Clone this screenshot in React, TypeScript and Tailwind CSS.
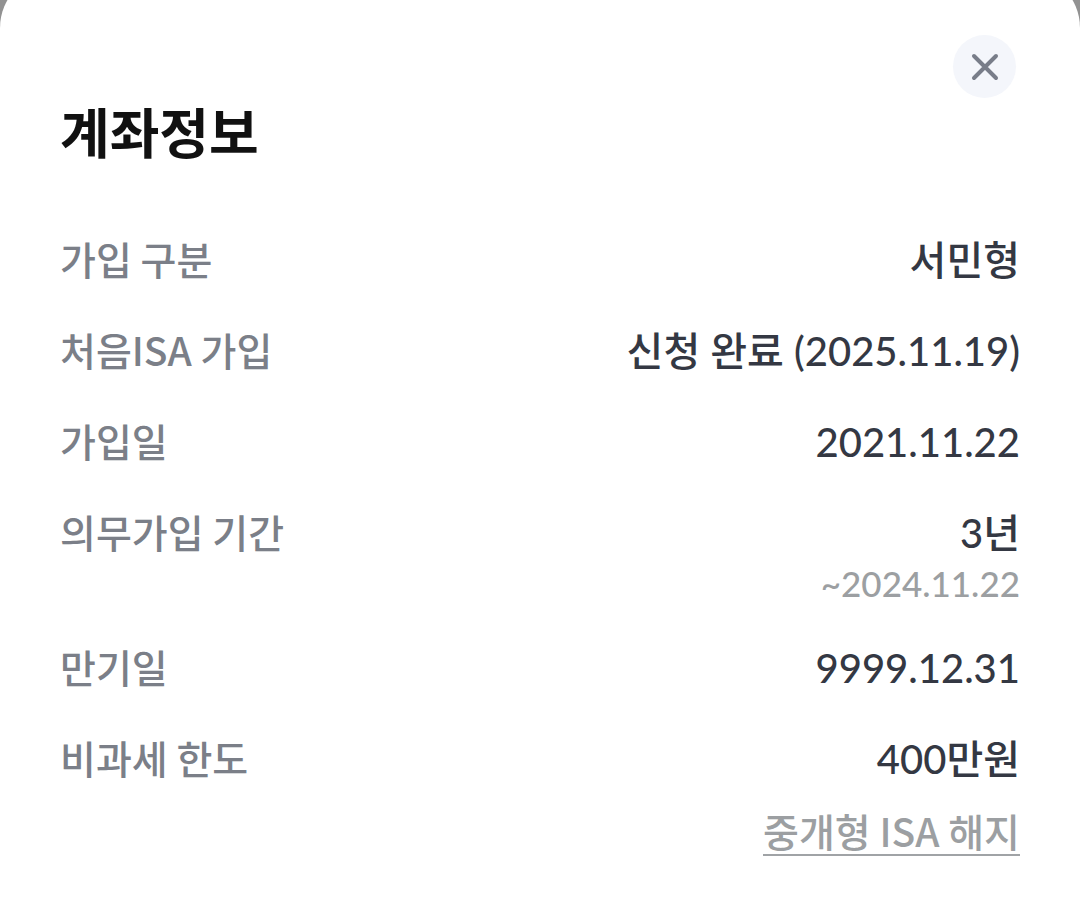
interface InfoItem {
  label: string;
  value: string;
  note?: string;
}

const items: InfoItem[] = [
  { label: "가입 구분", value: "서민형" },
  { label: "처음ISA 가입", value: "신청 완료 (2025.11.19)" },
  { label: "가입일", value: "2021.11.22" },
  { label: "의무가입 기간", value: "3년", note: "~2024.11.22" },
  { label: "만기일", value: "9999.12.31" },
  { label: "비과세 한도", value: "400만원" },
];

function CloseButton() {
  return (
    <button
      type="button"
      aria-label="닫기"
      className="mr-1 flex size-[63px] items-center justify-center rounded-full bg-[#f4f6fb] text-[#787d89]"
    >
      <svg viewBox="0 0 28 28" className="size-7" aria-hidden="true">
        <path
          d="M3 3L25 25M25 3L3 25"
          fill="none"
          stroke="currentColor"
          strokeWidth="4"
          strokeLinecap="round"
        />
      </svg>
    </button>
  );
}

function InfoRow({ label, value, note }: InfoItem) {
  return (
    <div className="flex items-start justify-between gap-6">
      <dt className="font-['Noto_Sans_CJK_KR',sans-serif] text-[39px] leading-[52px] text-[#7b7f88]">
        {label}
      </dt>
      <dd className="text-right text-[40px] leading-[56px] text-[#343843]">
        {value}
        {note && (
          <p className="text-[35px] leading-[44px] text-[#9c9fa2]">{note}</p>
        )}
      </dd>
    </div>
  );
}

export default function App() {
  return (
    <div className="flex min-h-screen flex-col overflow-hidden bg-[#929292] font-[Lato,'Noto_Sans_CJK_KR',sans-serif]">
      {/* the sheet's top edge sits above the viewport */}
      <main className="-mt-7 grow rounded-t-[56px] bg-white px-[60px] pt-[63px] pb-14">
        <div className="flex justify-end">
          <CloseButton />
        </div>
        <h1 className="text-[54px] leading-[72px] font-bold text-[#111111]">
          계좌정보
        </h1>
        <dl className="mt-[62px] flex flex-col gap-[35px] font-medium">
          {items.map((item) => (
            <InfoRow key={item.label} {...item} />
          ))}
        </dl>
        <div className="mt-6 flex justify-end">
          <a
            href="#close-account"
            className="border-b-2 border-[#a0a3a6] pb-1 font-['Noto_Sans_CJK_KR',sans-serif] text-[39px] leading-[39px] font-medium text-[#9c9fa2]"
          >
            중개형 ISA 해지
          </a>
        </div>
      </main>
    </div>
  );
}
